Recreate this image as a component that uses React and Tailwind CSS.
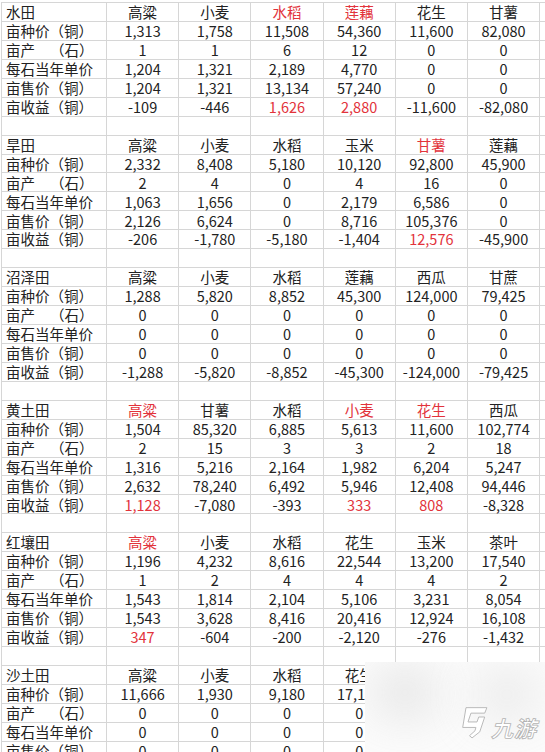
import React from 'react';

// '*' at the start marks a cell drawn in red, '|' splits a label into two spaced parts
const labels = ['亩种价（铜）', '亩产|（石）', '每石当年单价', '亩售价（铜）', '亩收益（铜）'];

const sections = [
  {
    name: '水田',
    crops: ['高粱', '小麦', '*水稻', '*莲藕', '花生', '甘薯'],
    rows: [
      ['1,313', '1,758', '11,508', '54,360', '11,600', '82,080'],
      ['1', '1', '6', '12', '0', '0'],
      ['1,204', '1,321', '2,189', '4,770', '0', '0'],
      ['1,204', '1,321', '13,134', '57,240', '0', '0'],
      ['-109', '-446', '*1,626', '*2,880', '-11,600', '-82,080'],
    ],
  },
  {
    name: '旱田',
    crops: ['高粱', '小麦', '水稻', '玉米', '*甘薯', '莲藕'],
    rows: [
      ['2,332', '8,408', '5,180', '10,120', '92,800', '45,900'],
      ['2', '4', '0', '4', '16', '0'],
      ['1,063', '1,656', '0', '2,179', '6,586', '0'],
      ['2,126', '6,624', '0', '8,716', '105,376', '0'],
      ['-206', '-1,780', '-5,180', '-1,404', '*12,576', '-45,900'],
    ],
  },
  {
    name: '沼泽田',
    crops: ['高粱', '小麦', '水稻', '莲藕', '西瓜', '甘蔗'],
    rows: [
      ['1,288', '5,820', '8,852', '45,300', '124,000', '79,425'],
      ['0', '0', '0', '0', '0', '0'],
      ['0', '0', '0', '0', '0', '0'],
      ['0', '0', '0', '0', '0', '0'],
      ['-1,288', '-5,820', '-8,852', '-45,300', '-124,000', '-79,425'],
    ],
  },
  {
    name: '黄土田',
    crops: ['*高粱', '甘薯', '水稻', '*小麦', '*花生', '西瓜'],
    rows: [
      ['1,504', '85,320', '6,885', '5,613', '11,600', '102,774'],
      ['2', '15', '3', '3', '2', '18'],
      ['1,316', '5,216', '2,164', '1,982', '6,204', '5,247'],
      ['2,632', '78,240', '6,492', '5,946', '12,408', '94,446'],
      ['*1,128', '-7,080', '-393', '*333', '*808', '-8,328'],
    ],
  },
  {
    name: '红壤田',
    crops: ['*高粱', '小麦', '水稻', '花生', '玉米', '茶叶'],
    rows: [
      ['1,196', '4,232', '8,616', '22,544', '13,200', '17,540'],
      ['1', '2', '4', '4', '4', '2'],
      ['1,543', '1,814', '2,104', '5,106', '3,231', '8,054'],
      ['1,543', '3,628', '8,416', '20,416', '12,924', '16,108'],
      ['*347', '-604', '-200', '-2,120', '-276', '-1,432'],
    ],
  },
  {
    name: '沙土田',
    crops: ['高粱', '小麦', '水稻', '花生', '', ''],
    rows: [
      ['11,666', '1,930', '9,180', '17,120', '', ''],
      ['0', '0', '0', '0', '', ''],
      ['0', '0', '0', '0', '', ''],
      ['0', '0', '0', '0', '', ''],
      ['0', '0', '0', '0', '', ''],
    ],
  },
];

function Cell({ value, left }) {
  const red = value.startsWith('*');
  const text = red ? value.slice(1) : value;
  const [a, b] = text.split('|');
  return (
    <div
      className={`flex items-center border-r border-b border-[#d6d6d6] pt-px leading-none whitespace-nowrap ${
        left ? 'pl-[4px]' : 'justify-center'
      } ${red ? 'text-[#e2333b]' : 'text-[#222]'}`}
    >
      {a}
      {b && <span className="ml-[15px]">{b}</span>}
    </div>
  );
}

function Row({ cells }) {
  return (
    <>
      {cells.map((c, i) => (
        <Cell key={i} value={c} left={i === 0} />
      ))}
      <div className="border-b border-[#d6d6d6]" />
    </>
  );
}

function Watermark() {
  return (
    <div className="absolute left-[365px] top-[662px] right-0 bottom-0 overflow-hidden bg-[#fbfbfb]">
      <div className="absolute left-[10px] top-[8px] w-[60px] h-[45px] rounded-full bg-[#d4d4d4] blur-xl opacity-70" />
      <div className="absolute left-[112px] top-[10px] w-[60px] h-[45px] rounded-full bg-[#d8d8d8] blur-xl opacity-60" />
      <div className="absolute left-[90px] top-[44px] flex items-center gap-[3px]">
        <svg width="33" height="33" viewBox="0 0 30 30">
          <path
            d="M10 1.5 H29 L27 6.5 H14.5 L11.8 14.5 H20 L21.6 10 H27 L22.5 23.5 L15.5 29 L13.2 27 L18.2 22.5 L19 19.5 H7 Z"
            fill="#fff"
            stroke="#b9b9b9"
            strokeWidth="0.9"
            strokeLinejoin="round"
          />
        </svg>
        <span className="mt-[8px] text-[22px] font-bold italic leading-none tracking-[1px] text-white [-webkit-text-stroke:0.8px_#b3b3b3] font-['Noto_Sans_CJK_SC',sans-serif]">
          九游
        </span>
      </div>
    </div>
  );
}

export default function App() {
  return (
    <div className="relative h-[752px] w-[545px] overflow-hidden bg-white pl-px pt-[2px] font-['Noto_Sans_CJK_SC','Noto_Sans',sans-serif] text-[14.5px]">
      <div className="grid grid-cols-[105px_repeat(6,72.2px)_1fr] auto-rows-[18.94px] border-l border-t border-[#d6d6d6]">
        {sections.map((s) => (
          <React.Fragment key={s.name}>
            <Row cells={[s.name, ...s.crops]} />
            {s.rows.map((r, i) => (
              <Row key={i} cells={[labels[i], ...r]} />
            ))}
            <Row cells={['', '', '', '', '', '', '']} />
          </React.Fragment>
        ))}
      </div>
      <Watermark />
    </div>
  );
}
